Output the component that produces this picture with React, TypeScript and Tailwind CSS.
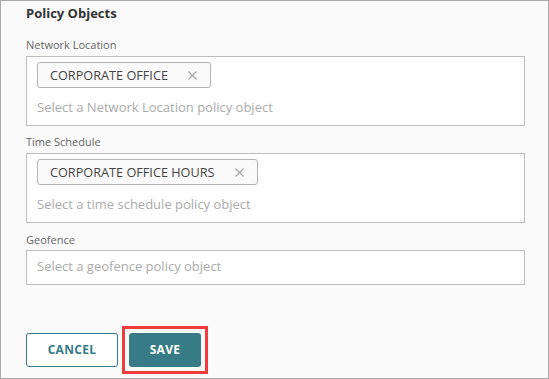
import React from "react";

function XIcon() {
  return (
    <svg width="9" height="9" viewBox="0 0 9 9" className="shrink-0">
      <path d="M0.5 0.5 L8.5 8.5 M8.5 0.5 L0.5 8.5" stroke="#a8a8a8" strokeWidth="1.1" fill="none" />
    </svg>
  );
}

function Chip({ label }: { label: string }) {
  return (
    <div className="inline-flex h-[26px] items-center rounded-[3px] border border-[#b3b3b3] bg-[#fafafa] pl-[12px] pr-[13px]">
      <span className="text-[12.7px] leading-[16px] text-[#444]">{label}</span>
      <span className="ml-[20px] flex items-center">
        <XIcon />
      </span>
    </div>
  );
}

export default function App() {
  return (
    <div className="flex h-[379px] w-[549px] flex-col border border-[#ababab] bg-[#fafafa] pl-[25px] pr-[23px] font-['Open_Sans',sans-serif]">
      <div className="mt-[2px] text-[13px] font-bold leading-[20px] text-[#333]">Policy Objects</div>

      <div className="mt-[14px]">
        <div className="mb-[4px] text-[11px] leading-[15px] text-[#666]">Network Location</div>
        <div className="flex h-[70px] flex-col items-start border border-[#bdbdbd] bg-white px-[10px] pt-[5px]">
          <Chip label="CORPORATE OFFICE" />
          <div className="mt-[11px] text-[13px] leading-[16px] text-[#ababab]">Select a Network Location policy object</div>
        </div>
      </div>

      <div className="mt-[8px]">
        <div className="mb-[4px] text-[11px] leading-[15px] text-[#666]">Time Schedule</div>
        <div className="flex h-[70px] flex-col items-start border border-[#bdbdbd] bg-white px-[10px] pt-[5px]">
          <Chip label="CORPORATE OFFICE HOURS" />
          <div className="mt-[11px] text-[13px] leading-[16px] text-[#ababab]">Select a time schedule policy object</div>
        </div>
      </div>

      <div className="mt-[9px]">
        <div className="mb-[3px] text-[11px] leading-[15px] text-[#666]">Geofence</div>
        <div className="h-[35px] border border-[#bdbdbd] bg-white px-[10px] pt-[7px]">
          <div className="text-[13px] leading-[16px] text-[#ababab]">Select a geofence policy object</div>
        </div>
      </div>

      <div className="mt-[48px] flex items-center">
        <button className="flex h-[34px] w-[92px] items-center justify-center rounded-[3px] border border-[#367b85] bg-white text-[12px] font-bold tracking-[0.3px] text-[#367b85]">
          CANCEL
        </button>
        <div className="relative ml-[11px]">
          <button className="flex h-[34px] w-[72px] items-center justify-center rounded-[3px] bg-[#367b85] text-[12px] font-bold tracking-[0.3px] text-white">
            SAVE
          </button>
          <span className="pointer-events-none absolute -inset-[7px] border-[3px] border-[#f03c3c]" />
        </div>
      </div>
    </div>
  );
}
